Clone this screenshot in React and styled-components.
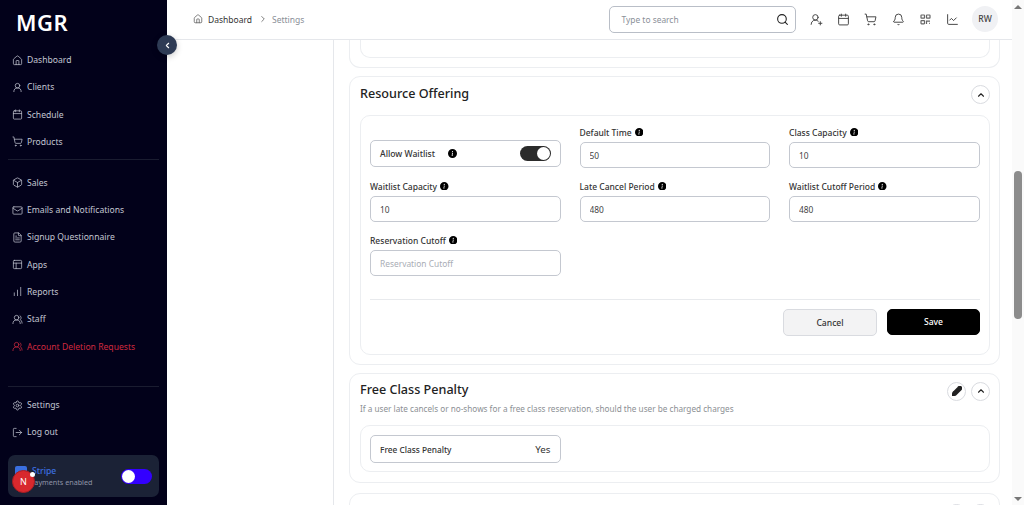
import styled, { createGlobalStyle } from "styled-components"
import {
  House, UserRound, Calendar, ShoppingCart, Box, Mail, FileText, PanelsTopLeft,
  ChartNoAxesColumnIncreasing, UsersRound, Settings, LogOut, Search, UserRoundPlus,
  Bell, ChartLine, ChevronUp, ChevronLeft, ChevronRight,
} from "lucide-react"
import { BsInfoCircleFill, BsPencilFill } from "react-icons/bs"

const GlobalStyle = createGlobalStyle`
  html, body { margin: 0; padding: 0; height: 100%; overflow: hidden; background: #fff; }
  #root { height: 100%; }
  * { box-sizing: border-box; }
  body { font-family: "Noto Sans", "Open Sans", sans-serif; color: #222; }
`

const Page = styled.div`
  display: flex;
  height: 505px;
  width: 1024px;
  overflow: hidden;
`

/* sidebar */
const Sidebar = styled.aside`
  position: relative;
  flex: 0 0 167px;
  background: #02011a;
  display: flex;
  flex-direction: column;
  padding: 8px 8px 8px;
`
const Logo = styled.div`
  font-size: 22px;
  font-weight: 600;
  letter-spacing: 0.5px;
  line-height: 28px;
  color: #fff;
  padding-left: 8px;
  margin-bottom: 10.4px;
`
const NavItem = styled.div`
  display: flex;
  align-items: center;
  gap: 4px;
  height: 27.3px;
  padding-left: 4px;
  font-size: 8.6px;
  color: ${({ $danger }) => ($danger ? "#d0293f" : "#c3c6d2")};
  svg { width: 11px; height: 11px; flex: none; stroke-width: 1.6; }
`
const NavRule = styled.div`
  height: 1px;
  background: #1a1c30;
  margin: ${({ $space }) => $space};
`
const Spacer = styled.div`
  flex: 1;
`
const CollapseButton = styled.button`
  position: absolute;
  top: 35px;
  right: -10px;
  width: 20px;
  height: 20px;
  border: 0;
  padding: 0;
  border-radius: 50%;
  background: #2e3b55;
  color: #fff;
  display: flex;
  align-items: center;
  justify-content: center;
  box-shadow: 0 2px 6px rgba(0, 0, 0, 0.2);
  z-index: 3;
  svg { width: 9px; height: 9px; stroke-width: 3; }
`
const StripeCard = styled.div`
  position: relative;
  height: 42px;
  margin-top: 9px;
  border-radius: 7px;
  background: #1b2236;
  display: flex;
  align-items: center;
  justify-content: space-between;
  padding: 0 7px 0 22px;
`
const StripeLogo = styled.span`
  position: absolute;
  left: 7px;
  top: 11px;
  width: 12px;
  height: 12px;
  border-radius: 2px;
  background: #3a6fe0;
`
const StripeText = styled.div`
  display: flex;
  flex-direction: column;
  padding-bottom: 1px;
  font-size: 7.2px;
  line-height: 10px;
  color: #8f94a6;
  b { margin-left: 2px; font-size: 8.6px; font-weight: 500; color: #3c6fe0; line-height: 12px; }
`
const NotifyBadge = styled.span`
  position: absolute;
  left: 4px;
  top: 15px;
  width: 23px;
  height: 23px;
  border-radius: 50%;
  background: #d8282d;
  border: 1.5px solid #a81d22;
  color: #fff;
  font-size: 9px;
  display: flex;
  align-items: center;
  justify-content: center;
  &::after {
    content: "";
    position: absolute;
    right: -1.3px;
    top: 0.7px;
    width: 5px;
    height: 5px;
    border-radius: 50%;
    background: #fff;
  }
`
const PayToggle = styled.span`
  width: 31px;
  height: 15px;
  border-radius: 8px;
  background: #3300ff;
  padding: 1px;
  &::before {
    content: "";
    display: block;
    width: 13px;
    height: 13px;
    border-radius: 50%;
    background: #fff;
  }
`

/* header */
const Main = styled.div`
  flex: 1;
  min-width: 0;
  display: flex;
  flex-direction: column;
`
const TopBar = styled.header`
  flex: 0 0 40px;
  display: flex;
  align-items: center;
  justify-content: space-between;
  border-bottom: 1px solid #e5e7eb;
  padding: 0 14px 1px 26px;
`
const Crumbs = styled.div`
  display: flex;
  align-items: center;
  font-size: 8.5px;
  color: #333;
  svg { width: 10px; height: 10px; color: #666; }
`
const CrumbMuted = styled.span`
  color: #8a8f98;
`
const CrumbText = styled.span`
  margin: ${({ $gap }) => $gap || 0};
`
const TopRight = styled.div`
  display: flex;
  align-items: center;
`
const SearchBox = styled.div`
  width: 187px;
  height: 27px;
  border: 1px solid #b9bec7;
  border-radius: 5px;
  display: flex;
  align-items: center;
  justify-content: space-between;
  padding: 0 6px 0 12px;
  margin-right: 14.5px;
  font-size: 8.4px;
  color: #8a8f98;
  svg { width: 13px; height: 13px; color: #222; }
`
const ToolIcons = styled.div`
  display: flex;
  gap: 14.2px;
  margin-right: 13px;
  svg { width: 13px; height: 13px; color: #444; stroke-width: 1.8; display: block; }
`
const QrSvg = styled.svg`
  && { stroke-width: 1.2; color: #666; }
`
const Avatar = styled.div`
  width: 26px;
  height: 26px;
  border-radius: 50%;
  background: #f0f1f4;
  color: #444;
  font-size: 8.6px;
  font-weight: 500;
  display: flex;
  align-items: center;
  justify-content: center;
`

/* content */
const Body = styled.div`
  flex: 1;
  min-height: 0;
  display: flex;
  overflow: hidden;
`
const SideColumn = styled.div`
  flex: 0 0 167px;
  border-right: 1px solid #e5e7eb;
`
const Content = styled.main`
  flex: 1;
  min-width: 0;
  padding-left: 15px;
  padding-right: 12px;
  display: flex;
  flex-direction: column;
  gap: 8px;
`
const Card = styled.section`
  flex: none;
  border: 1px solid #eceef1;
  border-radius: 11px;
  padding: ${({ $pad }) => $pad || "10px"};
  height: ${({ $h }) => $h};
  margin-top: ${({ $top }) => $top};
`
const StubCard = styled(Card)`
  height: 28px;
  border-top: 0;
  border-radius: 0 0 11px 11px;
  padding: 0 9px 0 10px;
`
const StubInner = styled.div`
  height: 18px;
  border: 1px solid #eceef1;
  border-top: 0;
  border-radius: 0 0 10px 10px;
`
const CardHead = styled.div`
  display: flex;
  justify-content: space-between;
  align-items: center;
  height: ${({ $h }) => $h || "20px"};
`
const CardTitle = styled.h2`
  margin: 0 0 3px;
  font-size: 12.6px;
  font-weight: 500;
  color: #222;
`
const CardNote = styled.p`
  margin: 1px 0 0;
  font-size: 8.2px;
  line-height: 13px;
  color: #8c8f94;
`
const RoundButtons = styled.div`
  display: flex;
  gap: 5px;
`
const RoundButton = styled.button`
  width: 19px;
  height: 19px;
  padding: 0;
  border: 1px solid #d9dbe0;
  border-radius: 50%;
  background: #fff;
  color: #222;
  display: flex;
  align-items: center;
  justify-content: center;
  svg { width: ${({ $icon }) => $icon || "10px"}; height: ${({ $icon }) => $icon || "10px"}; stroke-width: 2.6; }
`
const Inner = styled.div`
  border: 1px solid #eceef1;
  border-radius: 10px;
  padding: ${({ $pad }) => $pad || "10px"};
  margin-top: ${({ $top }) => $top};
  height: ${({ $h }) => $h};
`
const FieldGrid = styled.div`
  display: grid;
  grid-template-columns: repeat(3, 190.5px);
  column-gap: 19px;
  row-gap: 11px;
  align-items: end;
`
const Field = styled.div`
  display: flex;
  flex-direction: column;
  gap: 3px;
`
const Label = styled.label`
  display: flex;
  align-items: center;
  gap: 3px;
  height: 14px;
  font-size: 8.5px;
  font-weight: 500;
  color: #333;
  svg { width: 8.5px; height: 8.5px; color: #000; }
`
const TextInput = styled.input`
  width: 100%;
  height: 26px;
  padding: 0 9px;
  border: 1px solid #c4c8d0;
  border-radius: 5px;
  background: #fff;
  font-family: inherit;
  font-size: 8.4px;
  color: #444;
  outline: none;
  &::placeholder { color: #a9adb5; opacity: 1; }
`
const SwitchRow = styled.div`
  height: 27px;
  margin-bottom: 1px;
  border: 1px solid #c4c8d0;
  border-radius: 5px;
  display: flex;
  align-items: center;
  padding: 0 9px;
  font-size: 8.6px;
  font-weight: 500;
  color: #333;
`
const InfoGap = styled.span`
  display: flex;
  margin-left: 13px;
  flex: 1;
  svg { width: 9px; height: 9px; color: #000; }
`
const Switch = styled.span`
  width: 31px;
  height: 15px;
  border-radius: 8px;
  background: #2b2b2b;
  display: flex;
  justify-content: flex-end;
  padding: 1px;
  &::before {
    content: "";
    width: 13px;
    height: 13px;
    border-radius: 50%;
    background: #fff;
  }
`
const Divider = styled.div`
  height: 1px;
  background: #e8eaed;
  margin: 23px 0 9px;
`
const Actions = styled.div`
  display: flex;
  justify-content: flex-end;
  gap: 10px;
`
const Action = styled.button`
  width: ${({ $primary }) => ($primary ? "93px" : "94px")};
  height: ${({ $primary }) => ($primary ? "26px" : "27px")};
  border: 1px solid ${({ $primary }) => ($primary ? "#000" : "#d9dbe0")};
  border-radius: 5px;
  background: ${({ $primary }) => ($primary ? "#000" : "#f3f3f4")};
  color: ${({ $primary }) => ($primary ? "#fff" : "#333")};
  font-family: inherit;
  font-size: 8.6px;
  font-weight: 500;
`
const ValueRow = styled.div`
  width: 190.5px;
  height: 28px;
  border: 1px solid #c4c8d0;
  border-radius: 5px;
  display: flex;
  align-items: center;
  justify-content: space-between;
  padding: 0 9px;
  font-size: 8.3px;
  font-weight: 500;
  color: #333;
  span { font-size: 9.8px; font-weight: 400; }
`

/* page scrollbar */
const ScrollTrack = styled.div`
  flex: 0 0 12px;
  background: #fafafa;
  display: flex;
  flex-direction: column;
  align-items: center;
`
const ScrollArrow = styled.span`
  flex: none;
  width: 0;
  height: 0;
  margin: ${({ $margin }) => $margin};
  border-left: 4px solid transparent;
  border-right: 4px solid transparent;
  ${({ $down }) => ($down ? "border-top: 4px solid #777;" : "border-bottom: 4px solid #777;")}
`
const ScrollThumb = styled.div`
  flex: none;
  width: 8px;
  height: 148px;
  margin-top: 162px;
  border-radius: 4px;
  background: #8c8c8c;
`

// the four block qr glyph from the toolbar
const QrGlyph = () => (
  <QrSvg viewBox="0 0 13 13" fill="none" stroke="currentColor">
    <rect x="2" y="2" width="3.5" height="3.2" rx="0.5" />
    <rect x="7.5" y="2" width="3.5" height="3.2" rx="0.5" />
    <rect x="2" y="7.6" width="3.5" height="3.2" rx="0.5" />
    <path d="M7.5 11V8.2h3.5M10.2 10.4h.8" />
  </QrSvg>
)

const mainNav = [
  [House, "Dashboard"],
  [UserRound, "Clients"],
  [Calendar, "Schedule"],
  [ShoppingCart, "Products"],
]
const moreNav = [
  [Box, "Sales"],
  [Mail, "Emails and Notifications"],
  [FileText, "Signup Questionnaire"],
  [PanelsTopLeft, "Apps"],
  [ChartNoAxesColumnIncreasing, "Reports"],
  [UsersRound, "Staff"],
]
const fields = [
  ["Default Time", "50"],
  ["Class Capacity", "10"],
  ["Waitlist Capacity", "10"],
  ["Late Cancel Period", "480"],
  ["Waitlist Cutoff Period", "480"],
  ["Reservation Cutoff", ""],
]

const App = () => {
  return (
    <Page>
      <GlobalStyle />
      <Sidebar>
        <Logo>MGR</Logo>
        {mainNav.map(([Icon, name]) => (
          <NavItem key={name}><Icon />{name}</NavItem>
        ))}
        <NavRule $space="3px 0 9.5px" />
        {moreNav.map(([Icon, name]) => (
          <NavItem key={name}><Icon />{name}</NavItem>
        ))}
        <NavItem $danger><UsersRound />Account Deletion Requests</NavItem>
        <Spacer />
        <NavRule $space="0 0 4px" />
        <NavItem><Settings />Settings</NavItem>
        <NavItem><LogOut />Log out</NavItem>
        <StripeCard>
          <StripeLogo />
          <StripeText>
            <b>Stripe</b>
            Payments enabled
          </StripeText>
          <PayToggle />
          <NotifyBadge>N</NotifyBadge>
        </StripeCard>
        <CollapseButton><ChevronLeft /></CollapseButton>
      </Sidebar>

      <Main>
        <TopBar>
          <Crumbs>
            <House />
            <CrumbText $gap="0 6px 0 5px">Dashboard</CrumbText>
            <ChevronRight />
            <CrumbMuted><CrumbText $gap="0 0 0 4px">Settings</CrumbText></CrumbMuted>
          </Crumbs>
          <TopRight>
            <SearchBox>
              Type to search
              <Search />
            </SearchBox>
            <ToolIcons>
              <UserRoundPlus />
              <Calendar />
              <ShoppingCart />
              <Bell />
              <QrGlyph />
              <ChartLine />
            </ToolIcons>
            <Avatar>RW</Avatar>
          </TopRight>
        </TopBar>
        <Body>
          <SideColumn />
          <Content>
            <StubCard><StubInner /></StubCard>
            <Card $h="289px" $pad="7px 9px 9px 10px">
              <CardHead $h="21px">
                <CardTitle>Resource Offering</CardTitle>
                <RoundButton><ChevronUp /></RoundButton>
              </CardHead>
              <Inner $top="10px" $h="240px" $pad="9px 9px 0 9px">
                <FieldGrid>
                  <SwitchRow>
                    Allow Waitlist
                    <InfoGap><BsInfoCircleFill /></InfoGap>
                    <Switch />
                  </SwitchRow>
                  {fields.map(([name, value]) => (
                    <Field key={name}>
                      <Label>{name} <BsInfoCircleFill /></Label>
                      <TextInput
                        readOnly
                        value={value}
                        placeholder={value ? undefined : name}
                      />
                    </Field>
                  ))}
                </FieldGrid>
                <Divider />
                <Actions>
                  <Action>Cancel</Action>
                  <Action $primary>Save</Action>
                </Actions>
              </Inner>
            </Card>
            <Card $h="110px" $pad="7px 9px 9px 10px">
              <CardHead>
                <CardTitle>Free Class Penalty</CardTitle>
                <RoundButtons>
                  <RoundButton $icon="10px"><BsPencilFill /></RoundButton>
                  <RoundButton><ChevronUp /></RoundButton>
                </RoundButtons>
              </CardHead>
              <CardNote>If a user late cancels or no-shows for a free class reservation, should the user be charged charges</CardNote>
              <Inner $top="10px" $h="47px" $pad="9px">
                <ValueRow>Free Class Penalty<span>Yes</span></ValueRow>
              </Inner>
            </Card>
            <Card $h="40px" $top="2px" $pad="9px 9px 9px 10px">
              <CardHead>
                <span />
                <RoundButtons>
                  <RoundButton $icon="10px"><BsPencilFill /></RoundButton>
                  <RoundButton><ChevronUp /></RoundButton>
                </RoundButtons>
              </CardHead>
            </Card>
          </Content>
        </Body>
      </Main>

      <ScrollTrack>
        <ScrollArrow $margin="5px 0 0" />
        <ScrollThumb />
        <Spacer />
        <ScrollArrow $down $margin="0 0 4px" />
      </ScrollTrack>
    </Page>
  )
}

export default App
